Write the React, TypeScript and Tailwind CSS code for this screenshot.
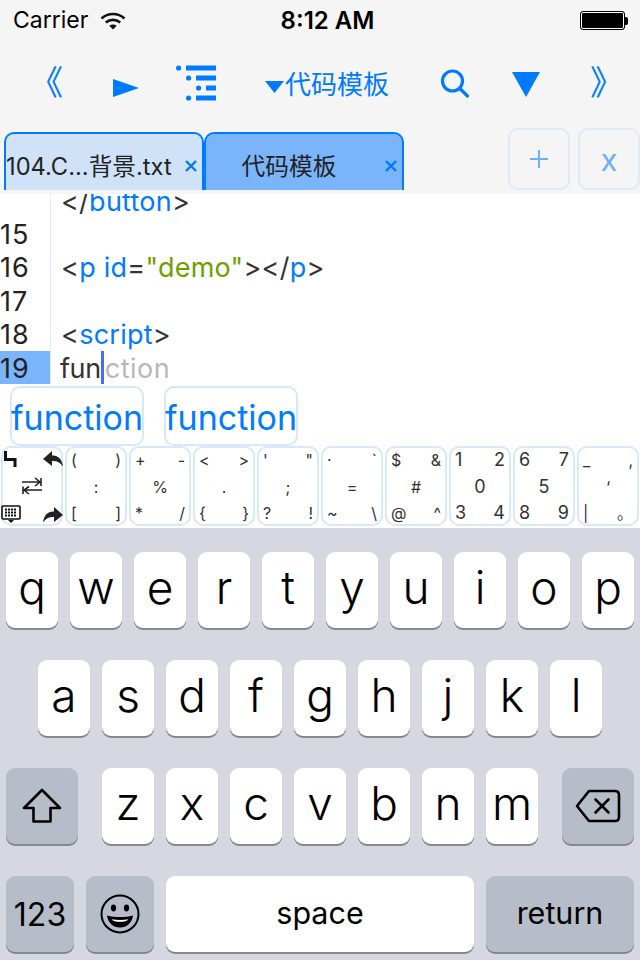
import type { ReactNode } from "react";

// Symbol keys above the system keyboard: top-left, top-right, centre, bottom-left, bottom-right.
const SYMBOLS: [string, string, string, string, string][] = [
  ["(", ")", ":", "[", "]"],
  ["+", "-", "%", "*", "/"],
  ["<", ">", ".", "{", "}"],
  ["'", '"', ";", "?", "!"],
  ["·", "`", "=", "~", "\\"],
  ["$", "&", "#", "@", "^"],
  ["1", "2", "0", "3", "4"],
  ["6", "7", "5", "8", "9"],
  ["_", ",", "\u2018", "|", "。"],
];

const ROW1 = ["q", "w", "e", "r", "t", "y", "u", "i", "o", "p"];
const ROW2 = ["a", "s", "d", "f", "g", "h", "j", "k", "l"];
const ROW3 = ["z", "x", "c", "v", "b", "n", "m"];

function StatusBar() {
  return (
    <div className="flex h-10 items-center justify-between pl-[13px] pr-[12px] pt-[1px] text-black">
      <div className="flex w-[207px] items-center gap-[12px] text-[23px]">
        <span>Carrier</span>
        <svg width="26" height="20" viewBox="0 0 26 20" fill="none" stroke="#111" strokeWidth="2.6">
          <path d="M1.5 7.5C8 1.5 18 1.5 24.5 7.5" />
          <path d="M5.8 11.5C10 8 16 8 20.2 11.5" />
          <path d="M13 18.6L9.3 14.8C11.4 13.2 14.6 13.2 16.7 14.8Z" fill="#111" stroke="none" />
        </svg>
      </div>
      <span className="text-[24px] font-semibold">8:12 AM</span>
      <div className="flex w-[193px] items-center justify-end">
        <div className="h-[19px] w-[45px] rounded-[3px] border border-black bg-black outline outline-white -outline-offset-2" />
        <div className="h-[8px] w-[3px] rounded-r-[2px] bg-black" />
      </div>
    </div>
  );
}

function Toolbar() {
  return (
    <div className="flex h-[88px] items-center text-[#007aff]">
      <div className="flex w-[108px] justify-center pb-[2px]">
        <span className="text-[34px] leading-none [transform:translateX(-8px)]">《</span>
      </div>
      <div className="flex w-[36px] justify-center pt-[8px]">
        <svg width="26" height="18" viewBox="0 0 26 18" fill="#007aff"><path d="M0 0L26 9L0 18Z" /></svg>
      </div>
      <div className="ml-[32px] flex w-[40px] justify-center">
        <svg width="40" height="38" viewBox="0 0 40 38" fill="#007aff">
          <circle cx="2.6" cy="3" r="2.6" />
          <rect x="10" y="0.5" width="30" height="5" />
          <circle cx="12.6" cy="13" r="2.6" />
          <rect x="20" y="10.5" width="20" height="5" />
          <circle cx="22.6" cy="23" r="2.6" />
          <rect x="30" y="20.5" width="10" height="5" />
          <circle cx="12.6" cy="33" r="2.6" />
          <rect x="20" y="30.5" width="20" height="5" />
        </svg>
      </div>
      <div className="ml-[49px] flex w-[126px] items-center pt-[2px]">
        <svg width="20" height="12" viewBox="0 0 20 12" fill="#007aff" className="mt-[4px]"><path d="M0 0H19L9.5 12Z" /></svg>
        <span className="text-[26px] leading-none">代码模板</span>
      </div>
      <div className="ml-[49px] flex w-[30px] justify-center">
        <svg width="30" height="30" viewBox="0 0 30 30" fill="none" stroke="#007aff" strokeWidth="3.2" strokeLinecap="round">
          <circle cx="12.5" cy="12" r="10" />
          <path d="M19.8 19.5L27.5 27" />
        </svg>
      </div>
      <div className="ml-[42px] flex w-[28px] justify-center">
        <svg width="28" height="25" viewBox="0 0 28 25" fill="#007aff"><path d="M0 0H28L14 25Z" /></svg>
      </div>
      <div className="ml-[60px] flex w-[30px] justify-center pb-[2px]">
        <span className="text-[34px] leading-none [transform:translateX(-8px)]">》</span>
      </div>
    </div>
  );
}

function Tab({ label, active, center }: { label: string; active?: boolean; center?: boolean }) {
  return (
    <div
      className={`relative flex h-[58px] w-[200px] items-center rounded-t-[10px] border-2 border-b-0 border-[#007aff] pt-[9px] text-[23.7px] leading-none text-[#222] ${
        active ? "bg-[#7ab5fb]" : "bg-[#cfe2f8]"
      } ${center ? "justify-center pr-[30px]" : "pl-0"}`}
    >
      <span className="whitespace-nowrap">{label}</span>
      <svg className="absolute right-[5px] top-[26px]" width="12" height="12" viewBox="0 0 12 12" stroke="#007aff" strokeWidth="2.4">
        <path d="M1 1L11 11M11 1L1 11" />
      </svg>
    </div>
  );
}

function SquareButton({ children }: { children: ReactNode }) {
  return (
    <div className="flex h-[62px] w-[62px] items-center justify-center rounded-[10px] border-2 border-[#dceafa] text-[#6eaefa]">
      {children}
    </div>
  );
}

function TabBar() {
  return (
    <div className="flex h-[62px] items-end justify-between pl-[4px]">
      <div className="flex">
        <Tab label="104.C...背景.txt" />
        <Tab label="代码模板" active center />
      </div>
      <div className="flex gap-[8px]">
        <SquareButton>
          <svg width="18" height="18" viewBox="0 0 18 18" stroke="#6eaefa" strokeWidth="2"><path d="M9 0V18M0 9H18" /></svg>
        </SquareButton>
        <SquareButton>
          <span className="text-[31px] leading-none">x</span>
        </SquareButton>
      </div>
    </div>
  );
}

function Line({ n, active, children }: { n?: number; active?: boolean; children?: ReactNode }) {
  return (
    <div className="flex h-[33.4px] items-center text-[27px] leading-none text-[#333]">
      <div className={`flex h-full w-[51px] shrink-0 items-center border-r border-[#dceafa] tracking-[1px] text-[#222] ${active ? "bg-[#7ab5fb]" : ""}`}>{n}</div>
      <div className="flex h-full items-center whitespace-nowrap pl-[10px] tracking-[0.25px]">{children}</div>
    </div>
  );
}

const Tag = ({ children }: { children: ReactNode }) => <span className="text-[#007aff]">{children}</span>;

function Editor() {
  return (
    <div className="h-[190px] overflow-hidden bg-white">
      <div className="-mt-[9.6px]">
        <Line>&lt;/<Tag>button</Tag>&gt;</Line>
        <Line n={15} />
        <Line n={16}>
          &lt;<Tag>p&nbsp;id</Tag>=<span className="text-[#6f9e00]">"demo"</span>&gt;&lt;/<Tag>p</Tag>&gt;
        </Line>
        <Line n={17} />
        <Line n={18}>&lt;<Tag>script</Tag>&gt;</Line>
        <Line n={19} active>
          <span className="-ml-[1px] tracking-[-0.4px]">fun</span>
          <span className="h-[34px] w-[3px] bg-[#4a6cf0]" />
          <span className="ml-[1px] tracking-[0.5px] text-[#b8b8b8]">ction</span>
        </Line>
      </div>
    </div>
  );
}

function Suggestions() {
  return (
    <div className="flex h-[62px] items-start gap-[20px] bg-white pl-[10px] pt-[2px]">
      {[0, 1].map((i) => (
        <div key={i} className="flex h-[60px] w-[134px] items-center justify-center rounded-[10px] border-2 border-[#d7e8fc] pt-[3px] text-[34px] leading-none text-[#007aff]">
          function
        </div>
      ))}
    </div>
  );
}

function ActionKey() {
  return (
    <div className="flex h-[80px] w-[62px] flex-col justify-between rounded-[10px] border-2 border-[#d7e8fc] pb-[1px] pt-[3px]">
      <div className="flex items-start justify-between">
        <svg width="13" height="16" viewBox="0 0 13 16" fill="none" stroke="#111" strokeWidth="3" className="ml-[1px]">
          <path d="M1.5 0V8.5H11V16" />
        </svg>
        <svg width="20" height="16" viewBox="0 0 20 16" fill="#222" className="-mr-[2px]">
          <path d="M0 8L9 0V4.5C15 4 19 8 20 15.5C17 11 13 9.5 9 10V15Z" />
        </svg>
      </div>
      <div className="flex justify-center">
        <svg width="20" height="18" viewBox="0 0 20 18" fill="none" stroke="#222" strokeWidth="1.6">
          <path d="M0 5H18M13 1L18 5L13 9M19 1V9" />
          <path d="M20 13H2M7 9.5L2 13L7 17M1 9.5V17" />
        </svg>
      </div>
      <div className="flex items-end justify-between">
        <svg width="20" height="18" viewBox="0 0 20 18" className="-ml-[2px]">
          <rect x="1" y="1" width="18" height="13" rx="1" fill="#fff" stroke="#111" strokeWidth="1.6" />
          <path d="M4 4.5H16M4 7.5H16M4 10.5H16" stroke="#111" strokeWidth="2" strokeDasharray="2 1" />
          <path d="M7 15H13L10 18Z" fill="#111" />
        </svg>
        <svg width="20" height="16" viewBox="0 0 20 16" fill="#222" className="-mr-[2px]">
          <path d="M20 8L11 0V4.5C5 4 1 8 0 15.5C3 11 7 9.5 11 10V15Z" />
        </svg>
      </div>
    </div>
  );
}

function SymbolKey({ keys, big }: { keys: string[]; big?: boolean }) {
  const [tl, tr, c, bl, br] = keys;
  const size = big ? "text-[18px]" : "text-[16px]";
  return (
    <div className={`flex h-[80px] w-[62px] flex-col justify-between rounded-[10px] border-2 border-[#d7e8fc] px-[4px] pt-[1px] leading-[22px] text-[#333] ${size}`}>
      <div className="flex justify-between"><span>{tl}</span><span>{tr}</span></div>
      <div className="text-center">{c}</div>
      <div className="flex justify-between"><span>{bl}</span><span>{br}</span></div>
    </div>
  );
}

function SymbolRow() {
  return (
    <div className="flex h-[82px] gap-[2px] bg-white pl-[1px]">
      <ActionKey />
      {SYMBOLS.map((k, i) => (
        <SymbolKey key={i} keys={k} big={i === 6 || i === 7} />
      ))}
    </div>
  );
}

function Key({ children, dark, className = "w-[52px] pb-[7px] font-light", text = "text-[46px]" }: { children: ReactNode; dark?: boolean; className?: string; text?: string }) {
  return (
    <div
      className={`flex h-[76px] shrink-0 items-center justify-center rounded-[9px] leading-none text-black shadow-[0_2px_0_#88898d] ${
        dark ? "bg-[#b6bdc9]" : "bg-white"
      } ${className} ${text}`}
    >
      {children}
    </div>
  );
}

function Keyboard() {
  return (
    <div className="flex h-[432px] flex-col gap-[32px] bg-[#d5d8e1] pt-[24px]">
      <div className="flex justify-center gap-[12px]">
        {ROW1.map((k) => <Key key={k}>{k}</Key>)}
      </div>
      <div className="flex justify-center gap-[12px]">
        {ROW2.map((k) => <Key key={k}>{k}</Key>)}
      </div>
      <div className="flex justify-center gap-[24px]">
        <Key dark className="w-[72px]">
          <svg width="40" height="36" viewBox="0 0 40 36" fill="none" stroke="#000" strokeWidth="2.6" strokeLinejoin="round">
            <path d="M20 2L38 20H28.5V33.5H11.5V20H2Z" />
          </svg>
        </Key>
        <div className="flex gap-[12px]">
          {ROW3.map((k) => <Key key={k}>{k}</Key>)}
        </div>
        <Key dark className="w-[72px]">
          <svg width="46" height="34" viewBox="0 0 46 34" fill="none" stroke="#000" strokeWidth="2.6" strokeLinejoin="round">
            <path d="M14 2H40Q44 2 44 6V28Q44 32 40 32H14L2 17Z" />
            <path d="M20.5 10.5L33.5 23.5M33.5 10.5L20.5 23.5" strokeLinecap="round" />
          </svg>
        </Key>
      </div>
      <div className="flex justify-center gap-[12px]">
        <Key dark className="w-[68px] pt-[2px]" text="text-[32px]">123</Key>
        <Key dark className="w-[68px]">
          <svg width="40" height="40" viewBox="0 0 40 40" fill="none" stroke="#000" strokeWidth="2">
            <circle cx="20" cy="20" r="18.5" />
            <ellipse cx="13.5" cy="14" rx="2.6" ry="3.4" fill="#000" stroke="none" />
            <ellipse cx="26.5" cy="14" rx="2.6" ry="3.4" fill="#000" stroke="none" />
            <path d="M7 21.5C15 23.5 25 23.5 33 21.5C32 29 27 33.5 20 33.5C13 33.5 8 29 7 21.5Z" fill="#000" stroke="none" />
            <path d="M11.5 25.2C17 26.2 23 26.2 28.5 25.2C27 27 24 27.8 20 27.8C16 27.8 13 27 11.5 25.2Z" fill="#fff" stroke="none" />
          </svg>
        </Key>
        <Key className="w-[308px] pb-[2px]" text="text-[30.5px]">space</Key>
        <Key dark className="w-[148px] pb-[2px]" text="text-[30.5px]">return</Key>
      </div>
    </div>
  );
}

export default function App() {
  return (
    <div className="h-[960px] w-[640px] overflow-hidden bg-[#f5f5f5] [font-family:Inter,'Noto_Sans_CJK_SC',sans-serif]">
      <StatusBar />
      <Toolbar />
      <TabBar />
      <div className="h-[4px]" />
      <Editor />
      <Suggestions />
      <SymbolRow />
      <Keyboard />
    </div>
  );
}
